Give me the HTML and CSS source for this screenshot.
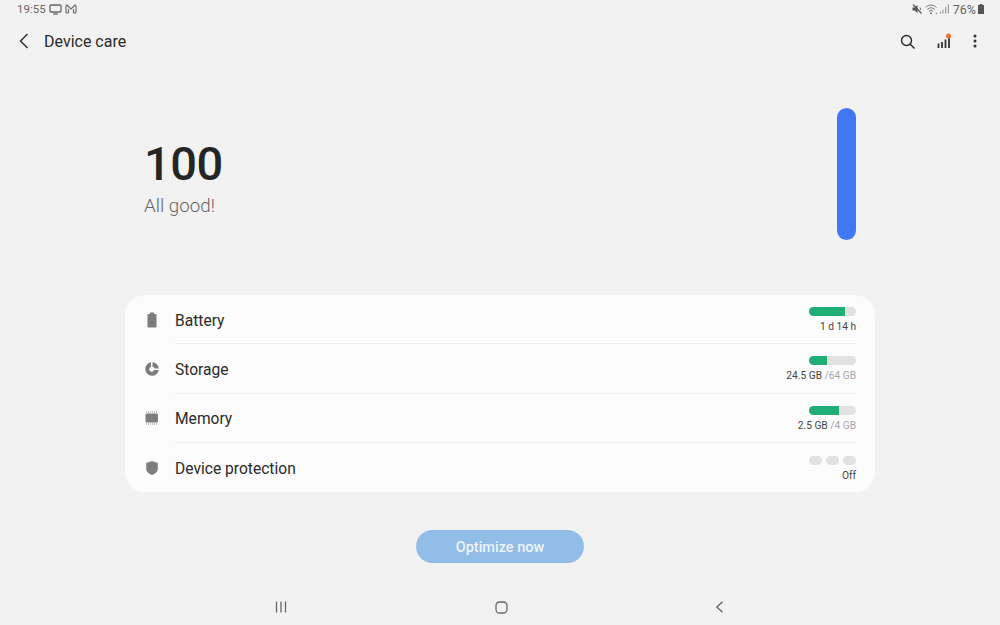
FILE: index.html
```html
<!DOCTYPE html>
<html lang="en">
<head>
  <meta charset="UTF-8" />
  <title>Device care</title>
  <link rel="stylesheet" href="styles.css">
</head>
<body>
  <div class="screen">
    <div class="statusbar">
      <div class="status-left">
        <span>19:55</span>
        <svg width="13" height="11" viewBox="0 0 13 11"><rect x="1" y="1" width="11" height="7" rx="1" fill="none" stroke="#666" stroke-width="1.3"/><path d="M4 10h5" stroke="#666" stroke-width="1.3"/></svg>
        <svg width="12" height="10" viewBox="0 0 12 10"><path d="M1 9V2l1-1 4 4 4-4 1 1v7M3.500 9V5M8.500 9V5M1 9h2.500M8.500 9H11" fill="none" stroke="#666" stroke-width="1.100"/></svg>
      </div>
      <div class="status-right">
        <svg width="11" height="10" viewBox="0 0 11 10"><path d="M.5 3.500h2L5.500 1v8l-3-2.500h-2z" fill="#555"/><path d="M1 .5l8.500 9" stroke="#555" stroke-width="1.200"/><path d="M8 3.500c.6.800.6 2 .3 2.500" stroke="#555" fill="none"/></svg>
        <svg width="13" height="11" viewBox="0 0 13 11"><path d="M.5 3.500c3-3.200 8-3.200 11 0M2.300 5.500c2-2.200 5.400-2.200 7.400 0M4 7.400c1-1.200 3-1.200 4 0" fill="none" stroke="#777" stroke-width="1"/><circle cx="6" cy="9.300" r="1" fill="#777"/><circle cx="11.500" cy="9.500" r=".7" fill="#777"/></svg>
        <svg class="signal" width="9" height="10" viewBox="0 0 9 10"><path d="M.5 7.500v2M3 5.500v4M5.700 3v6.500M8.300 .5v9" stroke="#888" stroke-width="1"/></svg>
        <span class="battery-pct">76%</span>
        <svg width="6" height="10" viewBox="0 0 6 10"><path d="M1.800 0h2.400v1H6v9H0V1h1.800z" fill="#555"/></svg>
      </div>
    </div>

    <div class="appbar">
      <div class="appbar-left">
        <svg width="10" height="16" viewBox="0 0 10 16"><path d="M8.500 1L1.500 8l7 7" fill="none" stroke="#333" stroke-width="1.500"/></svg>
        <h1 class="title">Device care</h1>
      </div>
      <div class="appbar-right">
        <svg width="15" height="15" viewBox="0 0 15 15"><circle cx="6.500" cy="6.500" r="5" fill="none" stroke="#2a2a2a" stroke-width="1.400"/><path d="M10 10l4.500 4.500" stroke="#2a2a2a" stroke-width="1.400"/></svg>
        <svg width="14" height="16" viewBox="0 0 14 16"><path d="M1.500 10.500V15M5 9v6M8.500 6.500V15M12 4v11" stroke="#333" stroke-width="1.800"/><circle cx="11.500" cy="3" r="2.500" fill="#e8782c"/></svg>
        <svg width="4" height="14" viewBox="0 0 4 14"><circle cx="2" cy="2" r="1.500" fill="#333"/><circle cx="2" cy="7" r="1.500" fill="#333"/><circle cx="2" cy="12" r="1.500" fill="#333"/></svg>
      </div>
    </div>

    <div class="hero">
      <div class="score">
        <div class="score-num">100</div>
        <div class="score-text">All good!</div>
      </div>
      <div class="score-pill"></div>
    </div>

    <div class="card">
      <div class="row">
        <svg class="row-icon" width="16" height="16" viewBox="0 0 16 16"><path d="M6 .5h4V2h1.500q1 0 1 1v11.500q0 1-1 1h-7q-1 0-1-1V3q0-1 1-1H6z" fill="#7d7d7d"/></svg>
        <div class="row-body">
          <span class="row-label">Battery</span>
          <div class="row-value">
            <div class="meter"><div class="meter-fill" style="width: 76%"></div></div>
            <div class="value-text">1 d 14 h</div>
          </div>
        </div>
      </div>
      <div class="row">
        <svg class="row-icon" width="16" height="16" viewBox="0 0 16 16"><path d="M7 1.200a6.800 6.800 0 1 0 7.800 7.800H9.900a2.400 2.400 0 1 1-2.900-2.900z" fill="#7d7d7d"/><path d="M8.500 1.200A6.800 6.800 0 0 1 14.800 7.500H10.600A2.400 2.400 0 0 0 8.500 5.700z" fill="#7d7d7d"/></svg>
        <div class="row-body">
          <span class="row-label">Storage</span>
          <div class="row-value">
            <div class="meter"><div class="meter-fill" style="width: 39%"></div></div>
            <div class="value-text">24.5 GB <span class="value-max">/64 GB</span></div>
          </div>
        </div>
      </div>
      <div class="row">
        <svg class="row-icon" width="16" height="16" viewBox="0 0 16 16"><rect x="1.500" y="3.500" width="12.500" height="9" rx="1.500" fill="#7d7d7d"/><path d="M2.500 1.500v1M4.500 1.500v1M6.500 1.500v1M8.500 1.500v1M10.500 1.500v1M12.500 1.500v1M2.500 13.500v1M4.500 13.500v1M6.500 13.500v1M8.500 13.500v1M10.500 13.500v1M12.500 13.500v1" stroke="#8a8a8a" stroke-width="1"/></svg>
        <div class="row-body">
          <span class="row-label">Memory</span>
          <div class="row-value">
            <div class="meter"><div class="meter-fill" style="width: 63%"></div></div>
            <div class="value-text">2.5 GB <span class="value-max">/4 GB</span></div>
          </div>
        </div>
      </div>
      <div class="row">
        <svg class="row-icon" width="16" height="16" viewBox="0 0 16 16"><path d="M8 1l5.800 2v5.500c0 3.200-2.600 5.500-5.800 6.500-3.200-1-5.800-3.300-5.800-6.500V3z" fill="#7d7d7d"/></svg>
        <div class="row-body">
          <span class="row-label">Device protection</span>
          <div class="row-value">
            <div class="dots"><span class="dot"></span><span class="dot"></span><span class="dot"></span></div>
            <div class="value-text">Off</div>
          </div>
        </div>
      </div>
    </div>

    <div class="action">
      <button class="optimize">Optimize now</button>
    </div>

    <div class="navbar">
      <svg width="12" height="12" viewBox="0 0 12 12"><path d="M1.500 .5v11M6 .5v11M10.500 .5v11" stroke="#666" stroke-width="1.300"/></svg>
      <svg width="13" height="13" viewBox="0 0 13 13"><rect x="1" y="1" width="11" height="11" rx="3.500" fill="none" stroke="#666" stroke-width="1.300"/></svg>
      <svg width="9" height="12" viewBox="0 0 9 12"><path d="M7.500 .8L1.800 6l5.700 5.200" fill="none" stroke="#666" stroke-width="1.300"/></svg>
    </div>
  </div>
</body>
</html>
```

FILE: styles.css
```css
body {
  margin: 0;
  background: #f2f2f2;
  font-family: Roboto, 'Liberation Sans', sans-serif;
  color: #252525;
}
.screen {
  width: 1000px;
  height: 625px;
  overflow: hidden;
  display: flex;
  flex-direction: column;
}
.statusbar {
  height: 18px;
  display: flex;
  justify-content: space-between;
  align-items: center;
  padding: 0 16px 0 17px;
  font-size: 11.500px;
  color: #666;
}
.status-left, .status-right {
  display: flex;
  align-items: center;
}
.status-left {
  gap: 3px;
}
.status-right {
  gap: 2px;
}
.battery-pct {
  margin-left: 2px;
  font-size: 12.500px;
}
.appbar {
  height: 46px;
  display: flex;
  justify-content: space-between;
  align-items: center;
  padding: 0 23px 0 19px;
}
.appbar-left {
  display: flex;
  align-items: center;
  gap: 15px;
}
.appbar-right {
  display: flex;
  align-items: center;
  gap: 22px;
}
.title {
  margin: 0;
  font-size: 16px;
  font-weight: 400;
  color: #2a2a2a;
}
.hero {
  height: 231px;
  box-sizing: border-box;
  margin: 0 125px;
  padding: 44px 19px 0;
  display: flex;
  justify-content: space-between;
  align-items: flex-start;
}
.score {
  padding-top: 28px;
}
.score-num {
  font-size: 47px;
  line-height: 56px;
  font-weight: 500;
  letter-spacing: -0.5px;
  color: #252525;
}
.score-text {
  margin-top: 2px;
  font-size: 18.800px;
  line-height: 24px;
  font-weight: 300;
  color: #666;
}
.score-pill {
  width: 19px;
  height: 132px;
  border-radius: 10px;
  background: #3f78f2;
}
.card {
  height: 197.300px;
  margin: 0 125px;
  padding: 0 19px;
  border-radius: 20px;
  background: #fcfcfc;
  display: flex;
  flex-direction: column;
}
.row {
  flex: 1;
  display: flex;
  align-items: center;
  gap: 12px;
}
.row-icon {
  flex: none;
}
.row-body {
  flex: 1;
  height: 100%;
  box-sizing: border-box;
  margin-left: 3px;
  padding-top: 3px;
  display: flex;
  justify-content: space-between;
  align-items: center;
  border-bottom: 1px solid #efefef;
}
.row:last-child .row-body {
  border-bottom: none;
}
.row-label {
  font-size: 15.600px;
  color: #2a2a2a;
}
.row-value {
  display: flex;
  flex-direction: column;
  align-items: flex-end;
  gap: 4px;
  margin-top: -1px;
}
.meter {
  width: 47px;
  height: 9px;
  border-radius: 5px;
  background: #e2e2e2;
  overflow: hidden;
}
.meter-fill {
  height: 100%;
  background: #1fae77;
}
.dots {
  display: flex;
  gap: 4px;
}
.dot {
  width: 13px;
  height: 9px;
  border-radius: 5px;
  background: #e2e2e2;
}
.value-text {
  font-size: 10.200px;
  line-height: 13px;
  color: #444;
}
.value-max {
  color: #a5a5a5;
}
.action {
  height: 71px;
  box-sizing: border-box;
  padding-top: 38px;
  display: flex;
  justify-content: center;
}
.optimize {
  width: 168px;
  height: 33px;
  padding: 2px 0 0;
  border: none;
  border-radius: 17px;
  background: #92bde8;
  color: #eef5fc;
  font-family: inherit;
  font-size: 14.500px;
  font-weight: 500;
}
.navbar {
  height: 20px;
  margin-top: 34px;
  display: flex;
  align-items: center;
  justify-content: space-between;
  padding: 0 276px 0 275px;
}
```
